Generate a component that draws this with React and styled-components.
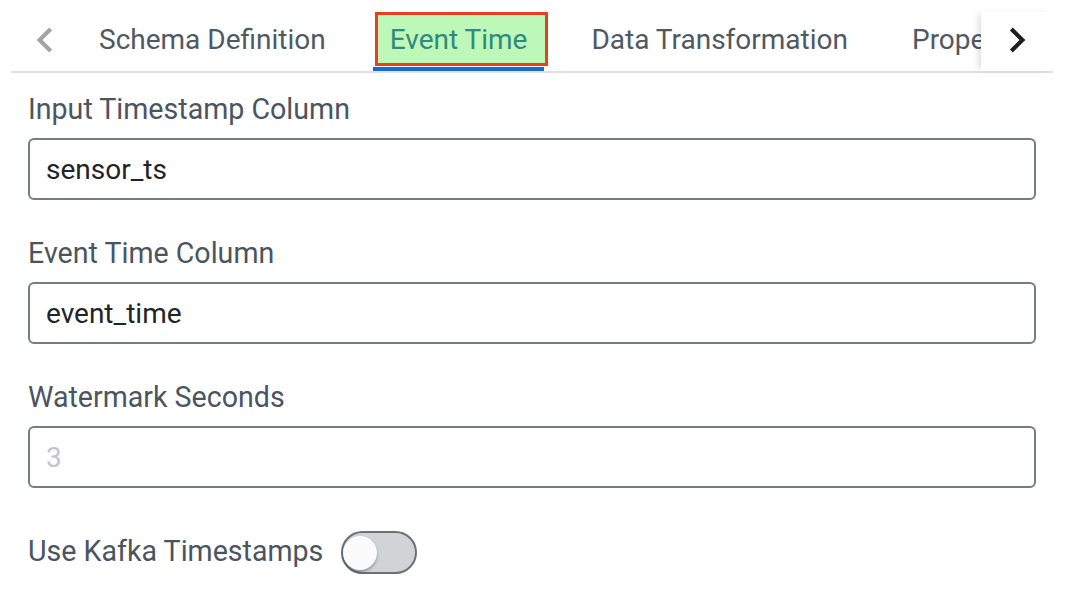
import React from "react";
import styled, { createGlobalStyle } from "styled-components";

const Global = createGlobalStyle`
  html, body { margin: 0; padding: 0; background: #ffffff; }
  body { font-family: Roboto, "Liberation Sans", Arial, sans-serif; }
  * { box-sizing: border-box; }
`;

const Page = styled.div`
  width: 1067px;
  height: 600px;
  background: #fff;
  overflow: hidden;
`;

const TabBar = styled.div`
  display: flex;
  align-items: stretch;
  margin: 0 14px 0 11px;
  padding-top: 12px;
  height: 73px;
  border-bottom: 2px solid #e0e0e0;
`;

const ScrollButton = styled.button`
  flex: 0 0 ${(p) => p.$w}px;
  display: flex;
  align-items: center;
  justify-content: center;
  border: none;
  background: #fff;
  padding: 0 0 4px;
  margin: 0;
  color: ${(p) => (p.$disabled ? "#a3a3a3" : "#1e1e1e")};
  position: relative;
  z-index: 2;
  box-shadow: ${(p) => (p.$shadow ? "-5px 0 6px -2px rgba(0,0,0,0.12)" : "none")};
`;

const TabScroller = styled.div`
  flex: 1;
  display: flex;
  gap: 30px;
  padding-left: 3px;
  overflow: hidden;
  white-space: nowrap;
`;

const Tab = styled.div`
  position: relative;
  flex: 0 0 auto;
  display: flex;
  align-items: center;
  padding: 0 17px 4px;
  font-size: 28px;
  color: ${(p) => (p.$active ? "#2f8a7f" : "#4f5963")};
  ${(p) =>
    p.$active &&
    `
    &::before {
      content: "";
      position: absolute;
      left: 2px;
      right: -4px;
      top: 0;
      bottom: 5px;
      background: #bdf8b8;
      border: 3px solid #e6401f;
    }
    &::after {
      content: "";
      position: absolute;
      left: 0;
      right: 0;
      bottom: 0;
      height: 4px;
      background: #1a6cc9;
    }
  `}
`;

const TabText = styled.span`
  position: relative;
  z-index: 1;
`;

const Content = styled.div`
  padding: 19px 31px 0 28px;
`;

const Field = styled.div`
  margin-bottom: 36px;
`;

const Label = styled.div`
  font-size: 28.6px;
  line-height: 34px;
  color: #4b5560;
  margin-bottom: 12px;
`;

const Input = styled.div`
  height: 62px;
  border: 2px solid #757c83;
  border-radius: 6px;
  display: flex;
  align-items: center;
  padding-left: 16px;
  font-size: 28px;
  color: ${(p) => (p.$placeholder ? "#c2c6ca" : "#212529")};
`;

const ToggleRow = styled.div`
  display: flex;
  align-items: center;
  gap: 18px;
  margin-top: 43px;
  font-size: 28.6px;
  line-height: 34px;
  color: #4b5560;
  position: relative;
  top: -2px;
`;

const Switch = styled.div`
  position: relative;
  top: 2px;
  width: 76px;
  height: 43px;
  border: 2px solid #6b7178;
  border-radius: 22px;
  background: #d1d3d7;
`;

const Knob = styled.div`
  position: absolute;
  left: 0px;
  top: 2.5px;
  width: 34px;
  height: 34px;
  border-radius: 50%;
  background: #fbfbfb;
  box-shadow: 0 2px 3px rgba(0, 0, 0, 0.3);
`;

const ChevronLeft = () => (
  <svg width="50" height="50" viewBox="0 0 24 24" fill="currentColor">
    <path d="M15.41 7.41 14 6l-6 6 6 6 1.41-1.41L10.83 12z" />
  </svg>
);

const ChevronRight = () => (
  <svg width="50" height="50" viewBox="0 0 24 24" fill="currentColor">
    <path d="M10 6 8.59 7.41 13.17 12l-4.58 4.59L10 18l6-6z" />
  </svg>
);

const tabs = ["Schema Definition", "Event Time", "Data Transformation", "Properties"];

export default function App() {
  return (
    <Page>
      <Global />
      <TabBar>
        <ScrollButton $w={68} $disabled>
          <ChevronLeft />
        </ScrollButton>
        <TabScroller>
          {tabs.map((t) => (
            <Tab key={t} $active={t === "Event Time"}>
              <TabText>{t}</TabText>
            </Tab>
          ))}
        </TabScroller>
        <ScrollButton $w={72} $shadow>
          <ChevronRight />
        </ScrollButton>
      </TabBar>
      <Content>
        <Field>
          <Label>Input Timestamp Column</Label>
          <Input>sensor_ts</Input>
        </Field>
        <Field>
          <Label>Event Time Column</Label>
          <Input>event_time</Input>
        </Field>
        <Field>
          <Label>Watermark Seconds</Label>
          <Input $placeholder>3</Input>
        </Field>
        <ToggleRow>
          Use Kafka Timestamps
          <Switch>
            <Knob />
          </Switch>
        </ToggleRow>
      </Content>
    </Page>
  );
}
